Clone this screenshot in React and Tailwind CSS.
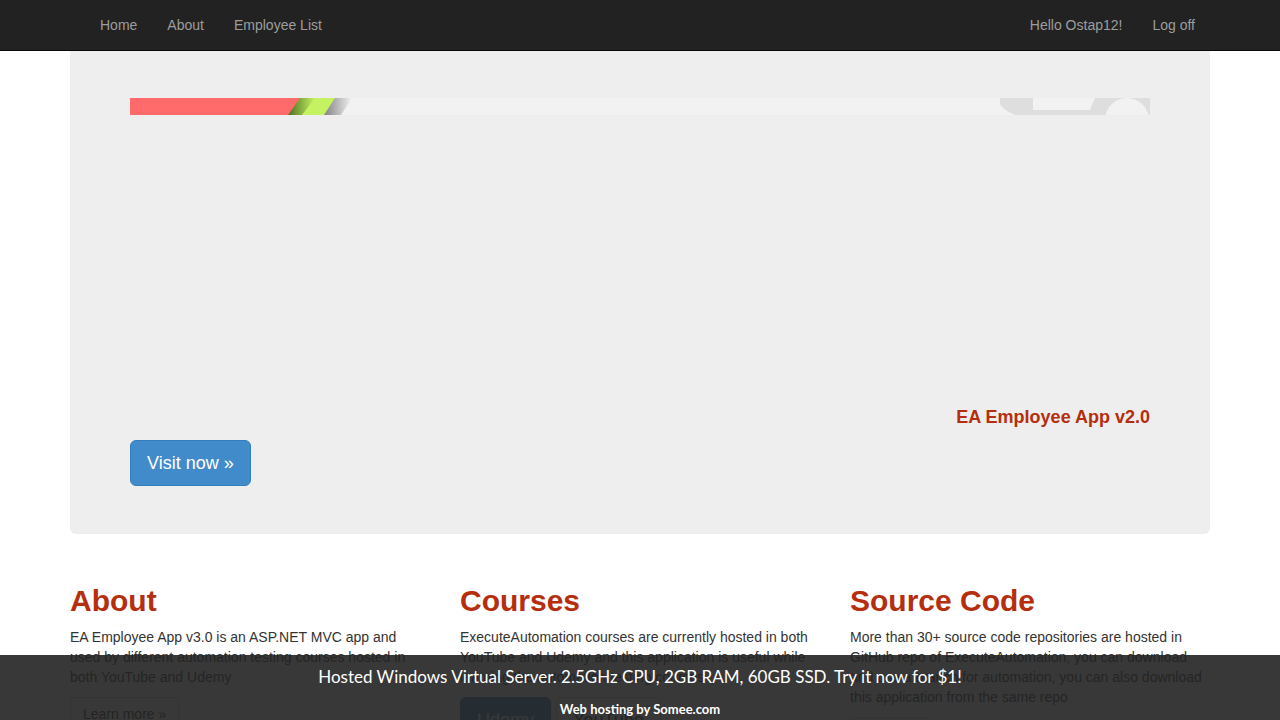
import React from "react";

function Strip() {
  return (
    <svg width="1020" height="17" viewBox="0 0 1020 17" className="block">
      <defs>
        <linearGradient id="g1" x1="0" x2="1" y1="0" y2="0">
          <stop offset="0" stopColor="#4d6b1f" />
          <stop offset="1" stopColor="#c5f263" />
        </linearGradient>
        <linearGradient id="g2" x1="0" x2="1" y1="0" y2="0">
          <stop offset="0" stopColor="#555" />
          <stop offset="1" stopColor="#f2f2f2" />
        </linearGradient>
      </defs>
      <rect x="0" y="0" width="1020" height="17" fill="#f2f2f2" />
      <polygon points="193,0 222,0 211,17 183,17" fill="url(#g2)" />
      <polygon points="170,0 205,0 194,17 157,17" fill="#c5f263" />
      <polygon points="168,0 185,0 172,17 157,17" fill="url(#g1)" />
      <polygon points="0,0 170,0 158,17 0,17" fill="#ff6b6b" />
      <path d="M870,0 L903,0 L903,12 L960,12 L965,0 L1020,0 L1020,17 L885,17 Q870,10 870,5 Z" fill="#dedede" />
      <rect x="903" y="0" width="57" height="12" fill="#f2f2f2" />
      <circle cx="997" cy="22" r="22" fill="#f2f2f2" />
    </svg>
  );
}

const btnClass = {
  lgPrimary:
    "inline-block border border-[#357ebd] bg-[#428bca] text-white text-[18px] leading-[24px] px-[16px] py-[10px] rounded-[6px]",
  lgDefault:
    "inline-block border border-[#ccc] bg-white text-[#333] text-[18px] leading-[24px] px-[16px] py-[10px] rounded-[6px]",
  default:
    "inline-block border border-[#ccc] bg-white text-[#333] text-[14px] leading-[20px] px-[12px] py-[6px] rounded-[4px]",
};

export default function App() {
  const sans = { fontFamily: '"Liberation Sans", Arial, sans-serif' };
  const cols = [
    {
      h: "About",
      p: "EA Employee App v3.0 is an ASP.NET MVC app and used by different automation testing courses hosted in both YouTube and Udemy",
      b: [["Learn more »", "default"]],
    },
    {
      h: "Courses",
      p: "ExecuteAutomation courses are currently hosted in both YouTube and Udemy and this application is useful while learning the automation testing courses",
      b: [["Udemy", "lgPrimary"], ["YouTube", "lgDefault"]],
    },
    {
      h: "Source Code",
      p: "More than 30+ source code repositories are hosted in GitHub repo of ExecuteAutomation, you can download and use a branch for automation, you can also download this application from the same repo",
      b: [["GitHub »", "default"]],
    },
  ];
  return (
    <div className="relative h-[720px] overflow-hidden bg-white text-[14px] leading-[20px] text-[#333]" style={sans}>
      <nav className="h-[51px] bg-[#222] border-b border-[#080808]">
        <div className="w-[1170px] mx-auto px-[15px] flex justify-between">
          <ul className="flex pl-[15px]">
            {["Home", "About", "Employee List"].map((t) => (
              <li key={t} className="px-[15px] py-[15px] text-[#9d9d9d]">{t}</li>
            ))}
          </ul>
          <ul className="flex">
            {["Hello Ostap12!", "Log off"].map((t) => (
              <li key={t} className="px-[15px] py-[15px] text-[#9d9d9d]">{t}</li>
            ))}
          </ul>
        </div>
      </nav>
      <div className="w-[1170px] mx-auto px-[15px]">
        <div className="bg-[#eee] rounded-b-[6px] pt-[47px] pb-[48px] px-[60px]">
          <div className="h-[302px]">
            <Strip />
          </div>
          <div className="text-right text-[18px] leading-[26px] font-bold text-[#b52e0d] my-[4px]">EA Employee App v2.0</div>
          <div className="mt-[10px]">
            <span className={btnClass.lgPrimary}>Visit now »</span>
          </div>
        </div>
        <div className="flex mt-[30px] -mx-[15px]">
          {cols.map((c) => (
            <div key={c.h} className="w-[390px] px-[15px]">
              <h2 className="mt-[20px] mb-[10px] text-[30px] leading-[33px] font-bold text-[#b52e0d]">{c.h}</h2>
              <p className="mb-[10px]">{c.p}</p>
              <p className="flex gap-[5px] items-start">
                {c.b.map(([t, k]) => (
                  <span key={t} className={btnClass[k]}>
                    {t}
                  </span>
                ))}
              </p>
            </div>
          ))}
        </div>
      </div>
      <div
        className="absolute left-0 right-0 top-[655px] h-[65px] bg-[#222]/90 text-white text-center"
        style={{ fontFamily: 'Lato, "Open Sans", sans-serif' }}
      >
        <div className="text-[17px] leading-[22px] pt-[11px]">Hosted Windows Virtual Server. 2.5GHz CPU, 2GB RAM, 60GB SSD. Try it now for $1!</div>
        <div className="text-[13px] leading-[16px] mt-[13px] font-bold">Web hosting by Somee.com</div>
      </div>
    </div>
  );
}
